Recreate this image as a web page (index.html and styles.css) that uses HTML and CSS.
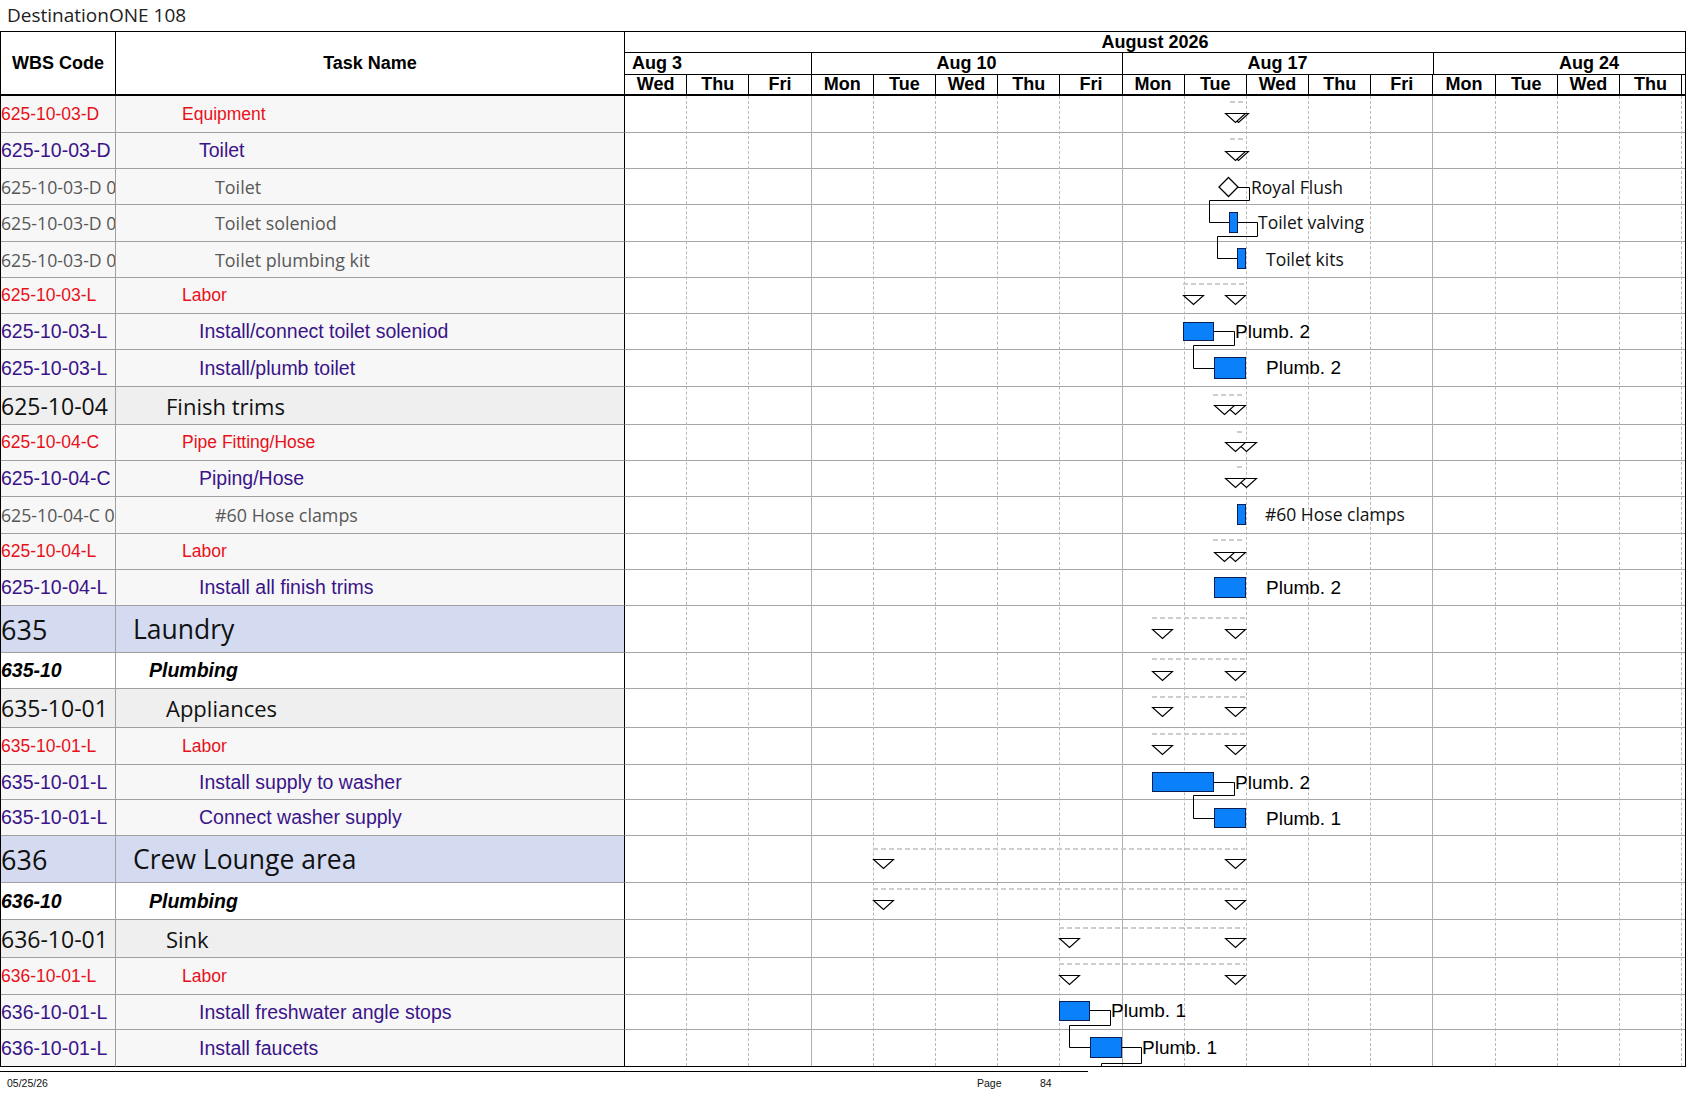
FILE: index.html
```html
<!DOCTYPE html>
<html>
<head>
<meta charset="utf-8">
<title>DestinationONE 108</title>
<link rel="stylesheet" href="styles.css">
</head>
<body>
<div class="title">DestinationONE 108</div>
<div class="sheet">
  <div class="head">
    <div class="h-wbs">WBS Code</div>
    <div class="h-name">Task Name</div>
    <div class="h-gantt">
      <div class="month">August 2026</div>
      <div class="weeks">
        <div class="wk-cell wk-left">Aug 3</div>
        <div class="wk-cell">Aug 10</div>
        <div class="wk-cell">Aug 17</div>
        <div class="wk-cell wk-last"><div class="wk-full">Aug 24</div></div>
      </div>
      <div class="days">
        <div>Wed</div><div>Thu</div><div>Fri</div>
        <div>Mon</div><div>Tue</div><div>Wed</div><div>Thu</div><div>Fri</div>
        <div>Mon</div><div>Tue</div><div>Wed</div><div>Thu</div><div>Fri</div>
        <div>Mon</div><div>Tue</div><div>Wed</div><div>Thu</div><div class="d-last"></div>
      </div>
    </div>
  </div>
  <div class="body">
    <div class="table">
      <div class="wbs t-red">625-10-03-D</div><div class="name t-red">Equipment</div>
      <div class="wbs t-pur">625-10-03-D</div><div class="name t-pur">Toilet</div>
      <div class="wbs t-gray">625-10-03-D 0</div><div class="name t-gray">Toilet</div>
      <div class="wbs t-gray">625-10-03-D 0</div><div class="name t-gray">Toilet soleniod</div>
      <div class="wbs t-gray">625-10-03-D 0</div><div class="name t-gray">Toilet plumbing kit</div>
      <div class="wbs t-red">625-10-03-L</div><div class="name t-red">Labor</div>
      <div class="wbs t-pur">625-10-03-L</div><div class="name t-pur">Install/connect toilet soleniod</div>
      <div class="wbs t-pur">625-10-03-L</div><div class="name t-pur">Install/plumb toilet</div>
      <div class="wbs t-l2">625-10-04</div><div class="name t-l2">Finish trims</div>
      <div class="wbs t-red">625-10-04-C</div><div class="name t-red">Pipe Fitting/Hose</div>
      <div class="wbs t-pur">625-10-04-C</div><div class="name t-pur">Piping/Hose</div>
      <div class="wbs t-gray">625-10-04-C 0</div><div class="name t-gray">#60 Hose clamps</div>
      <div class="wbs t-red">625-10-04-L</div><div class="name t-red">Labor</div>
      <div class="wbs t-pur">625-10-04-L</div><div class="name t-pur">Install all finish trims</div>
      <div class="wbs t-l1">635</div><div class="name t-l1">Laundry</div>
      <div class="wbs t-pl">635-10</div><div class="name t-pl">Plumbing</div>
      <div class="wbs t-l2">635-10-01</div><div class="name t-l2">Appliances</div>
      <div class="wbs t-red">635-10-01-L</div><div class="name t-red">Labor</div>
      <div class="wbs t-pur">635-10-01-L</div><div class="name t-pur">Install supply to washer</div>
      <div class="wbs t-pur">635-10-01-L</div><div class="name t-pur">Connect washer supply</div>
      <div class="wbs t-l1">636</div><div class="name t-l1">Crew Lounge area</div>
      <div class="wbs t-pl">636-10</div><div class="name t-pl">Plumbing</div>
      <div class="wbs t-l2">636-10-01</div><div class="name t-l2">Sink</div>
      <div class="wbs t-red">636-10-01-L</div><div class="name t-red">Labor</div>
      <div class="wbs t-pur">636-10-01-L</div><div class="name t-pur">Install freshwater angle stops</div>
      <div class="wbs t-pur end">636-10-01-L</div><div class="name t-pur end">Install faucets</div>
    </div>
    <div class="gantt">
      <div class="g-rows">
        <div></div><div></div><div></div><div></div><div></div><div></div><div></div><div></div><div></div>
        <div></div><div></div><div></div><div></div><div></div><div></div><div></div><div></div><div></div>
        <div></div><div></div><div></div><div></div><div></div><div></div><div></div><div class="end"></div>
      </div>
      <div class="g-cols">
        <div></div><div></div><div class="wk"></div>
        <div></div><div></div><div></div><div></div><div class="wk"></div>
        <div></div><div></div><div></div><div></div><div class="wk"></div>
        <div></div><div></div><div></div><div></div><div class="c-last"></div>
      </div>
      <svg class="chart" width="1060" height="971" viewBox="625 96 1060 971">
        <g class="sum">
          <line x1="1230" y1="102" x2="1246" y2="102"/>
          <line x1="1230" y1="139" x2="1246" y2="139"/>
          <line x1="1183" y1="284" x2="1245" y2="284"/>
          <line x1="1213" y1="395" x2="1245" y2="395"/>
          <line x1="1237" y1="432" x2="1245" y2="432"/>
          <line x1="1237" y1="467" x2="1245" y2="467"/>
          <line x1="1213" y1="540" x2="1245" y2="540"/>
          <line x1="1152" y1="618" x2="1245" y2="618"/>
          <line x1="1152" y1="659" x2="1245" y2="659"/>
          <line x1="1152" y1="697" x2="1245" y2="697"/>
          <line x1="1152" y1="734" x2="1245" y2="734"/>
          <line x1="873" y1="849" x2="1245" y2="849"/>
          <line x1="873" y1="889" x2="1245" y2="889"/>
          <line x1="1059" y1="928" x2="1245" y2="928"/>
          <line x1="1059" y1="964" x2="1245" y2="964"/>
        </g>
        <g class="tri">
          <polygon points="1228.5,113.5 1248.5,113.5 1238.5,122.5"/>
          <polygon points="1225.5,113.5 1245.5,113.5 1235.5,122.5"/>
          <polygon points="1228.5,151.5 1248.5,151.5 1238.5,160.5"/>
          <polygon points="1225.5,151.5 1245.5,151.5 1235.5,160.5"/>
          <polygon points="1183.5,295.5 1203.5,295.5 1193.5,304.5"/>
          <polygon points="1225.5,295.5 1245.5,295.5 1235.5,304.5"/>
          <polygon points="1225.5,405.5 1245.5,405.5 1235.5,414.5"/>
          <polygon points="1214.5,405.5 1234.5,405.5 1224.5,414.5"/>
          <polygon points="1236.5,442.5 1256.5,442.5 1246.5,451.5"/>
          <polygon points="1225.5,442.5 1245.5,442.5 1235.5,451.5"/>
          <polygon points="1236.5,478.5 1256.5,478.5 1246.5,487.5"/>
          <polygon points="1225.5,478.5 1245.5,478.5 1235.5,487.5"/>
          <polygon points="1225.5,552.5 1245.5,552.5 1235.5,561.5"/>
          <polygon points="1214.5,552.5 1234.5,552.5 1224.5,561.5"/>
          <polygon points="1152.5,629.5 1172.5,629.5 1162.5,638.5"/>
          <polygon points="1225.5,629.5 1245.5,629.5 1235.5,638.5"/>
          <polygon points="1152.5,671.5 1172.5,671.5 1162.5,680.5"/>
          <polygon points="1225.5,671.5 1245.5,671.5 1235.5,680.5"/>
          <polygon points="1152.5,707.5 1172.5,707.5 1162.5,716.5"/>
          <polygon points="1225.5,707.5 1245.5,707.5 1235.5,716.5"/>
          <polygon points="1152.5,745.5 1172.5,745.5 1162.5,754.5"/>
          <polygon points="1225.5,745.5 1245.5,745.5 1235.5,754.5"/>
          <polygon points="873.5,859.5 893.5,859.5 883.5,868.5"/>
          <polygon points="1225.5,859.5 1245.5,859.5 1235.5,868.5"/>
          <polygon points="873.5,900.5 893.5,900.5 883.5,909.5"/>
          <polygon points="1225.5,900.5 1245.5,900.5 1235.5,909.5"/>
          <polygon points="1059.5,938.5 1079.5,938.5 1069.5,947.5"/>
          <polygon points="1225.5,938.5 1245.5,938.5 1235.5,947.5"/>
          <polygon points="1059.5,975.5 1079.5,975.5 1069.5,984.5"/>
          <polygon points="1225.5,975.5 1245.5,975.5 1235.5,984.5"/>
        </g>
        <g class="link">
          <path d="M1238 187.5 H1249.5 V200.5 H1209.5 V222.5 H1229"/>
          <path d="M1237 222.5 H1257.5 V236.5 H1217.5 V258.5 H1237"/>
          <path d="M1213 331.5 H1234.5 V345.5 H1193.5 V368.5 H1214"/>
          <path d="M1213 782.5 H1234.5 V795.5 H1193.5 V818.5 H1214"/>
          <path d="M1089 1010.5 H1110.5 V1025.5 H1069.5 V1047.5 H1090"/>
          <path d="M1121 1047.5 H1141.5 V1063.5 H1101.5 V1067"/>
        </g>
        <polygon class="ms" points="1228.5,177.5 1238,187 1228.5,196.5 1219,187"/>
        <g class="bar">
          <rect x="1229.5" y="212.5" width="8" height="20"/>
          <rect x="1237.5" y="248.5" width="8" height="20"/>
          <rect x="1183.5" y="322.5" width="30" height="18"/>
          <rect x="1214.5" y="357.5" width="31" height="21"/>
          <rect x="1237.5" y="504.5" width="8" height="20"/>
          <rect x="1214.5" y="577.5" width="31" height="20"/>
          <rect x="1152.5" y="772.5" width="61" height="19"/>
          <rect x="1214.5" y="808.5" width="31" height="19"/>
          <rect x="1059.5" y="1001.5" width="30" height="19"/>
          <rect x="1090.5" y="1037.5" width="31" height="20"/>
        </g>
        <g class="lab-c">
          <text x="1251" y="187">Royal Flush</text>
          <text x="1258" y="222">Toilet valving</text>
          <text x="1266" y="259">Toilet kits</text>
          <text x="1265" y="514">#60 Hose clamps</text>
        </g>
        <g class="lab-a">
          <text x="1235" y="331">Plumb. 2</text>
          <text x="1266" y="367">Plumb. 2</text>
          <text x="1266" y="587">Plumb. 2</text>
          <text x="1235" y="782">Plumb. 2</text>
          <text x="1266" y="818">Plumb. 1</text>
          <text x="1111" y="1010">Plumb. 1</text>
          <text x="1142" y="1047">Plumb. 1</text>
        </g>
      </svg>
    </div>
  </div>
</div>
<div class="foot-line"></div>
<div class="footer">
  <span>05/25/26</span>
  <span>Page</span>
  <span>84</span>
</div>
</body>
</html>
```
FILE: styles.css
```css
:root {
  --rows: 37px 36px 36px 37px 36px 36px 36px 37px 38px 36px 36px 37px 36px 36px 47px 36px 39px 37px 35px 36px 47px 37px 38px 37px 35px 37px;
  --day: 62.2px;
}

* { box-sizing: border-box; }

body {
  margin: 0;
  background: #fff;
  font-family: "Liberation Sans", Arial, sans-serif;
  color: #000;
}

.title {
  height: 31px;
  line-height: 30px;
  padding-left: 7px;
  font-family: "Open Sans", sans-serif;
  font-weight: 400;
  font-size: 19px;
  color: #222;
}

.sheet {
  width: 1686px;
  border: 1px solid #000;
  border-bottom: none;
}

/* ---------- header ---------- */
.head {
  display: grid;
  grid-template-columns: 115px 509px 1060px;
  height: 64px;
  border-bottom: 2px solid #000;
  font-weight: bold;
  font-size: 18px;
}

.h-wbs, .h-name {
  display: flex;
  align-items: center;
  justify-content: center;
  border-right: 1px solid #000;
}

.h-gantt {
  display: grid;
  grid-template-rows: 21px 22px 19px;
}

.month {
  border-bottom: 1px solid #000;
  text-align: center;
  line-height: 20px;
}

.weeks {
  display: grid;
  grid-template-columns: calc(var(--day) * 3) calc(var(--day) * 5) calc(var(--day) * 5) 1fr;
  border-bottom: 1px solid #000;
}

.wk-cell {
  border-right: 1px solid #000;
  text-align: center;
  line-height: 21px;
  overflow: hidden;
  white-space: nowrap;
}

.wk-left {
  text-align: left;
  padding-left: 7px;
}

.wk-last { border-right: none; }

.wk-full {
  width: calc(var(--day) * 5);
  text-align: center;
}

.days {
  display: grid;
  grid-template-columns: repeat(17, var(--day)) 1fr;
}

.days > div {
  border-right: 1px solid #000;
  text-align: center;
  line-height: 19px;
}

.days > .d-last { border-right: none; }

/* ---------- body ---------- */
.body {
  display: flex;
}

.table {
  display: grid;
  grid-template-columns: 115px 509px;
  grid-template-rows: var(--rows);
  width: 624px;
}

.table > div {
  display: flex;
  align-items: center;
  white-space: nowrap;
  overflow: hidden;
  border-bottom: 1px solid #a0a0a0;
  background: #f7f7f7;
}

.table > .wbs {
  border-right: 1px solid #a0a0a0;
  padding-left: 0;
}

.table > .name {
  border-right: 1px solid #000;
}

.table > .end { border-bottom-color: #000; }

.t-red {
  color: #e8101a;
  font-size: 17.5px;
}
.name.t-red { padding-left: 66px; }

.t-pur {
  color: #3a1488;
  font-size: 19.5px;
}
.name.t-pur { padding-left: 83px; }

.t-gray {
  color: #585858;
  font-family: "Open Sans", sans-serif;
  font-size: 17.7px;
}
.name.t-gray { padding-left: 99px; font-size: 17.9px; }

.table > .t-l2 {
  background: #efefef;
  color: #111;
  font-family: "Open Sans", sans-serif;
  font-size: 23px;
}
.name.t-l2 { padding-left: 50px; font-size: 22px; }

.table > .t-l1 {
  background: #d4dbf1;
  color: #111;
  font-family: "Open Sans", sans-serif;
  font-size: 27px;
}
.name.t-l1 { padding-left: 17px; font-size: 26.5px; }

.table > .t-pl {
  background: #fff;
  font-weight: bold;
  font-style: italic;
  font-size: 19.5px;
}
.wbs.t-pl { font-size: 19.5px; }
.name.t-pl { padding-left: 33px; }

/* ---------- gantt ---------- */
.gantt {
  display: grid;
  width: 1060px;
}

.gantt > * {
  grid-area: 1 / 1;
}

.g-rows {
  display: grid;
  grid-template-rows: var(--rows);
}

.g-rows > div {
  border-bottom: 1px solid #a6a6a6;
  background: #fff;
}

.g-rows > .end { border-bottom-color: #000; }

.g-cols {
  display: grid;
  grid-template-columns: repeat(17, var(--day)) 1fr;
  height: 970px;
}

.g-cols > div { border-right: 1px dashed #b8b8b8; }
.g-cols > .wk { border-right: 1px solid #b0b0b0; }
.g-cols > .c-last { border-right: none; }

.chart { display: block; }

.sum line {
  stroke: #cdcdcd;
  stroke-width: 2;
  stroke-dasharray: 5 3;
}

.tri polygon {
  fill: #fff;
  stroke: #000;
  stroke-width: 1.1;
}

.link path {
  fill: none;
  stroke: #000;
  stroke-width: 1;
}

.ms {
  fill: #fff;
  stroke: #000;
  stroke-width: 1.3;
}

.bar rect {
  fill: #0a80fa;
  stroke: #0b1f55;
  stroke-width: 1;
}

.lab-c text {
  font-family: "Open Sans", sans-serif;
  font-size: 17.5px;
  fill: #111;
  dominant-baseline: central;
}

.lab-a text {
  font-family: "Liberation Sans", Arial, sans-serif;
  font-size: 19px;
  fill: #000;
  dominant-baseline: central;
}

/* ---------- footer ---------- */
.foot-line {
  width: 1088px;
  margin-top: 4px;
  border-top: 1px solid #000;
}

.footer {
  display: grid;
  grid-template-columns: 970px 63px auto;
  padding-left: 7px;
  margin-top: 5px;
  font-size: 10.5px;
  line-height: 13px;
  color: #111;
}
```
